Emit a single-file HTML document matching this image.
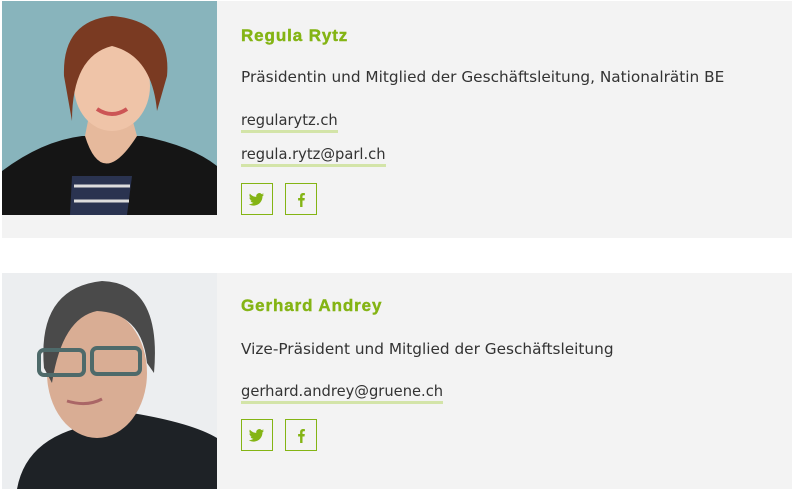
<!DOCTYPE html>
<html><head><meta charset="utf-8"><style>
body{margin:0;background:#fff;width:793px;height:489px;overflow:hidden;font-family:"Liberation Sans",sans-serif;}
.card{position:absolute;left:2px;width:790px;background:#f3f3f3;}
.ph{position:absolute;left:0;top:0;width:215px;overflow:hidden;}
.t{position:absolute;left:239px;white-space:nowrap}
.name{font-weight:bold;color:#84b414;font-size:17px;letter-spacing:0.9px;-webkit-text-stroke:0.4px #84b414}
.desc{color:#333;font-family:"DejaVu Sans",sans-serif;font-size:15.3px}
.lnk{color:#333;font-family:"DejaVu Sans",sans-serif;font-size:14.7px;border-bottom:3px solid #d3e4a8;padding-bottom:1px;line-height:18px}
.ic{position:absolute;width:30px;height:30px;border:1px solid #84b414;top:0}
</style></head><body>
<div class="card" style="top:1px;height:237px">
 <div class="ph" style="height:214px">
 <svg width="215" height="214"><rect width="215" height="214" fill="#88b4bc"/>
 <path d="M0 170 Q40 140 80 135 L140 135 Q190 145 215 165 L215 214 L0 214Z" fill="#151515"/>
 <path d="M70 175 L130 175 L125 214 L68 214Z" fill="#2a3350"/>
 <path d="M72 185h56M72 200h55" stroke="#ddd" stroke-width="3"/>
 <path d="M83 135 Q100 190 135 135 L128 110 L88 110Z" fill="#e6b99c"/>
 <ellipse cx="110" cy="85" rx="38" ry="45" fill="#efc4a8"/>
 <path d="M62 75 Q60 20 110 15 Q170 20 165 75 L155 110 Q150 55 110 45 Q70 55 70 120Z" fill="#7a3a22"/>
 <path d="M95 108 Q110 118 125 108" stroke="#c55" stroke-width="4" fill="none"/>
 </svg></div>
 <div class="t name" style="top:25px">Regula Rytz</div>
 <div class="t desc" style="top:67px">Präsidentin und Mitglied der Geschäftsleitung, Nationalrätin BE</div>
 <div class="t" style="top:111px"><span class="lnk">regularytz.ch</span></div>
 <div class="t" style="top:145px"><span class="lnk">regula.rytz@parl.ch</span></div>
 <div class="t" style="top:182px;left:239px">
  <div class="ic" style="left:0"><svg width="30" height="30" viewBox="0 0 30 30"><path d="M22 10.5c-.6.3-1.2.4-1.8.5.7-.4 1.1-1 1.4-1.7-.6.4-1.3.6-2 .8a3.1 3.1 0 0 0-5.3 2.8c-2.6-.1-4.9-1.4-6.4-3.3-.9 1.5-.4 3.3.9 4.2-.5 0-1-.2-1.4-.4 0 1.5 1.1 2.8 2.5 3.1-.5.1-1 .2-1.4.1.4 1.3 1.6 2.2 2.9 2.2-1.3 1-3 1.6-4.6 1.4 1.4.9 3.1 1.4 4.8 1.4 5.8 0 9-4.9 8.9-9.4.6-.4 1.1-1 1.5-1.6z" fill="#84b414"/></svg></div>
  <div class="ic" style="left:44px"><svg width="30" height="30"><path d="M16.5 23v-6.5h2l.3-2.5h-2.3v-1.5c0-.7.2-1.2 1.2-1.2h1.2V9.1c-.2 0-1-.1-1.8-.1-1.8 0-3 1.1-3 3.1V14h-2v2.5h2V23z" fill="#84b414"/></svg></div>
 </div>
</div>
<div class="card" style="top:273px;height:216px">
 <div class="ph" style="height:216px">
 <svg width="215" height="216"><rect width="215" height="216" fill="#eceef0"/>
 <path d="M15 216 Q25 160 100 150 L130 140 Q190 150 215 165 L215 216Z" fill="#1e2226"/>
 <ellipse cx="95" cy="100" rx="50" ry="65" fill="#d9ad94"/>
 <path d="M42 95 Q35 15 100 8 Q160 10 152 100 L145 90 Q140 40 95 38 Q60 45 50 110Z" fill="#4a4a4a"/>
 <rect x="37" y="77" width="45" height="25" rx="5" fill="none" stroke="#4e6a6a" stroke-width="4"/>
 <rect x="90" y="75" width="48" height="26" rx="5" fill="none" stroke="#4e6a6a" stroke-width="4"/>
 <path d="M65 128 Q85 134 100 126" stroke="#a66" stroke-width="3" fill="none"/>
 </svg></div>
 <div class="t name" style="top:23px">Gerhard Andrey</div>
 <div class="t desc" style="top:67px">Vize-Präsident und Mitglied der Geschäftsleitung</div>
 <div class="t" style="top:110px"><span class="lnk">gerhard.andrey@gruene.ch</span></div>
 <div class="t" style="top:146px;left:239px">
  <div class="ic" style="left:0"><svg width="30" height="30" viewBox="0 0 30 30"><path d="M22 10.5c-.6.3-1.2.4-1.8.5.7-.4 1.1-1 1.4-1.7-.6.4-1.3.6-2 .8a3.1 3.1 0 0 0-5.3 2.8c-2.6-.1-4.9-1.4-6.4-3.3-.9 1.5-.4 3.3.9 4.2-.5 0-1-.2-1.4-.4 0 1.5 1.1 2.8 2.5 3.1-.5.1-1 .2-1.4.1.4 1.3 1.6 2.2 2.9 2.2-1.3 1-3 1.6-4.6 1.4 1.4.9 3.1 1.4 4.8 1.4 5.8 0 9-4.9 8.9-9.4.6-.4 1.1-1 1.5-1.6z" fill="#84b414"/></svg></div>
  <div class="ic" style="left:44px"><svg width="30" height="30"><path d="M16.5 23v-6.5h2l.3-2.5h-2.3v-1.5c0-.7.2-1.2 1.2-1.2h1.2V9.1c-.2 0-1-.1-1.8-.1-1.8 0-3 1.1-3 3.1V14h-2v2.5h2V23z" fill="#84b414"/></svg></div>
 </div>
</div>
</body></html>
